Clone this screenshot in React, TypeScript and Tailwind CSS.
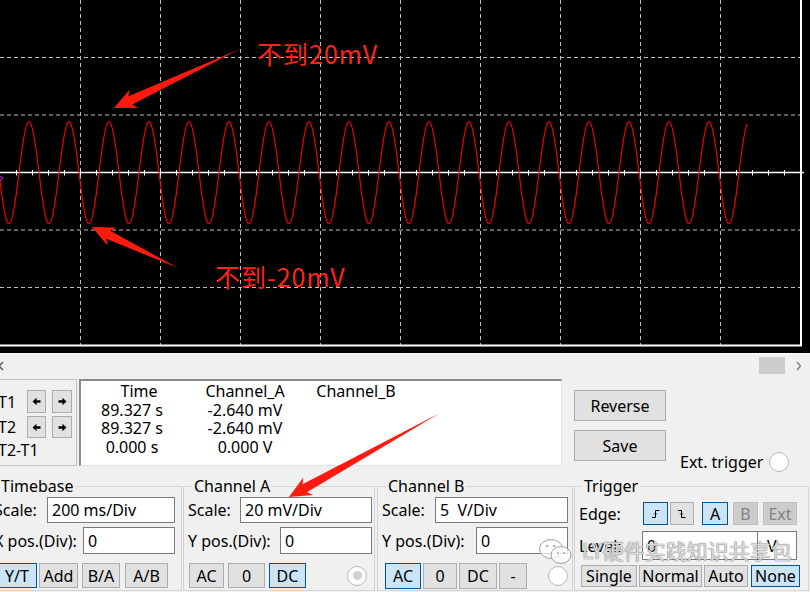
import React from 'react';

const btn = 'flex items-center justify-center border border-[#adadad] bg-[#e1e1e1] text-black leading-[18px]';
const btnOn = 'flex items-center justify-center border border-[#005499] bg-[#cce4f7] text-black leading-[18px]';
const btnOff = 'flex items-center justify-center border border-[#bfbfbf] bg-[#cccccc] text-[#838383] leading-[18px]';
const field = 'flex items-center border border-[#7a7a7a] bg-white leading-[18px] whitespace-pre';

// arrow polygon from tail to tip
function arrowPoints(tx: number, ty: number, px: number, py: number) {
  const h = 18, w = 10, s = 4.5, back = 4;
  const dx = px - tx, dy = py - ty;
  const L = Math.hypot(dx, dy);
  const ux = dx / L, uy = dy / L;
  const nx = -uy, ny = ux;
  const bx = px - ux * h, by = py - uy * h;
  const pts = [
    [tx, ty],
    [bx + nx * s, by + ny * s],
    [bx - ux * back + nx * w, by - uy * back + ny * w],
    [px, py],
    [bx - ux * back - nx * w, by - uy * back - ny * w],
    [bx - nx * s, by - ny * s],
  ];
  return pts.map((p) => p.map((v) => v.toFixed(1)).join(',')).join(' ');
}

const Scope = () => {
  const vx = [80, 160, 240, 320, 400, 480, 560, 640, 720];
  const hy = [57.5, 115, 230, 287.5];
  const ticks: number[] = [];
  for (let x = 16; x < 800; x += 16) ticks.push(x);
  let d = '';
  for (let x = 0; x <= 747; x++) {
    const y = 172.7 - 51 * Math.sin((2 * Math.PI * (x - 19)) / 40);
    d += (x === 0 ? 'M' : 'L') + x + ' ' + y.toFixed(1);
  }
  return (
    <svg width={810} height={353} className="block">
      {vx.map((x) => (
        <line key={x} x1={x + 0.5} y1={0} x2={x + 0.5} y2={345} stroke="#bdbdbd" strokeDasharray="4 3" />
      ))}
      {hy.map((y) => (
        <line key={y} x1={0} y1={y} x2={800} y2={y} stroke="#bdbdbd" strokeDasharray="4 3" />
      ))}
      <line x1={0} y1={172.5} x2={804} y2={172.5} stroke="#fff" strokeWidth={1.5} />
      {ticks.map((x) => (
        <line key={x} x1={x + 0.5} y1={170} x2={x + 0.5} y2={175.5} stroke="#fff" />
      ))}
      <line x1={801} y1={0} x2={801} y2={346} stroke="#fff" strokeWidth={2} />
      <line x1={0} y1={345.5} x2={802} y2={345.5} stroke="#fff" strokeWidth={2} />
      <path d={d} fill="none" stroke="#ff0000" strokeWidth={1.1} />
      <path d="M0 176 L3 178 L0 181" fill="none" stroke="#ff00ff" strokeWidth={1} />
    </svg>
  );
};

const ArrowIcon = ({ dir }: { dir: 'l' | 'r' }) => (
  <svg width={9} height={9} viewBox="0 0 9 9">
    <path
      d={dir === 'l' ? 'M0.5 4.5 L4.5 0.8 V3.3 H8.5 V5.7 H4.5 V8.2 Z' : 'M8.5 4.5 L4.5 0.8 V3.3 H0.5 V5.7 H4.5 V8.2 Z'}
      fill="#000"
    />
  </svg>
);

const Radio = ({ dot, className }: { dot?: boolean; className: string }) => (
  <div className={className}>
    <div className="w-full h-full rounded-full border border-[#b8b8b8] bg-white flex items-center justify-center">
      {dot && <div className="w-[9px] h-[9px] rounded-full bg-[#cfcfcf]" />}
    </div>
  </div>
);

const EdgeIcon = ({ rise }: { rise: boolean }) => (
  <svg width={10} height={10} viewBox="0 0 10 10">
    <path d={rise ? 'M1 8.5 H4.5 V1.5 H8.5' : 'M1 1.5 H4.5 V8.5 H8.5'} fill="none" stroke="#000" strokeWidth={1} />
    <path d={rise ? 'M3 5.5 L4.5 4 L6 5.5' : 'M3 4.5 L4.5 6 L6 4.5'} fill="none" stroke="#000" strokeWidth={0.9} />
  </svg>
);

const App: React.FC = () => {
  return (
    <div className="w-[810px] h-[592px] relative overflow-hidden bg-[#f0f0f0] text-[16px] text-black font-['Noto_Sans','Noto_Sans_CJK_SC',sans-serif]">
      {/* scope screen */}
      <div className="h-[353px] bg-black">
        <Scope />
      </div>
      <div className="h-px bg-white" />

      {/* scroll row */}
      <div className="h-[24px] flex items-start">
        <svg width={6} height={10} className="mt-[7px] -ml-[2px]" viewBox="0 0 6 10">
          <path d="M5 1 L1 5 L5 9" fill="none" stroke="#555" strokeWidth={1.5} />
        </svg>
        <div className="flex-1" />
        <div className="mt-[3px] w-[26px] h-[17px] bg-[#cdcdcd]" />
        <svg width={6} height={10} className="mt-[7px] ml-[11px] mr-[8px]" viewBox="0 0 6 10">
          <path d="M1 1 L4.5 5 L1 9" fill="none" stroke="#777" strokeWidth={1.2} />
        </svg>
      </div>

      {/* cursors + readout */}
      <div className="flex h-[93px] mt-px">
        <div className="-ml-[3px] w-[80px] h-[87px] border-t border-r border-b border-[#c4c4c4] pt-[10px] pl-px">
          <div className="flex items-center h-[23px]">
            <span className="w-[29px] leading-[18px]">T1</span>
            <div className={btn + ' w-[19px] h-[23px]'}><ArrowIcon dir="l" /></div>
            <div className={btn + ' ml-[6px] w-[20px] h-[23px]'}><ArrowIcon dir="r" /></div>
          </div>
          <div className="flex items-center h-[22px] mt-[3px]">
            <span className="w-[29px] leading-[18px]">T2</span>
            <div className={btn + ' w-[19px] h-[22px]'}><ArrowIcon dir="l" /></div>
            <div className={btn + ' ml-[6px] w-[20px] h-[22px]'}><ArrowIcon dir="r" /></div>
          </div>
          <div className="mt-[3px] leading-[18px]">T2-T1</div>
        </div>
        <div className="ml-[2px] w-[483px] h-[87px] bg-white border-l-2 border-t-2 border-r border-b border-l-[#8a8a8a] border-t-[#8a8a8a] border-r-[#e3e3e3] border-b-[#e3e3e3] pt-[1px]">
          <div className="grid grid-cols-[102px_124px_98px] leading-[18.5px] text-center">
            <div className="pl-[14px]">Time</div>
            <div>Channel_A</div>
            <div>Channel_B</div>
            <div>89.327 s</div>
            <div>-2.640 mV</div>
            <div />
            <div>89.327 s</div>
            <div>-2.640 mV</div>
            <div />
            <div>0.000 s</div>
            <div>0.000 V</div>
            <div />
          </div>
        </div>
        <div className="ml-[12px] w-[92px] pt-[11px] flex flex-col gap-[9px]">
          <div className={btn + ' h-[31px]'}>Reverse</div>
          <div className={btn + ' h-[31px]'}>Save</div>
        </div>
        <div className="ml-[14px] self-end flex items-center">
          <span className="leading-[18px]">Ext. trigger</span>
          <Radio className="ml-[6px] w-[20px] h-[20px]" />
        </div>
      </div>

      {/* control groups */}
      <div className="flex mt-[5px]">
        <fieldset className="-ml-[12px] w-[194px] h-[114px] border border-[#d5d5d5] pl-[5px]">
          <legend className="ml-[5px] px-[2px] leading-[18px]">Timebase</legend>
          <div className="flex items-center mt-[2px]">
            <span className="w-[53px] leading-[18px]">Scale:</span>
            <div className={field + ' w-[128px] h-[26px] pl-[4px]'}>200 ms/Div</div>
          </div>
          <div className="flex items-center mt-[4px]">
            <span className="w-[89px] leading-[18px]">X pos.(Div):</span>
            <div className={field + ' w-[92px] h-[27px] pl-[4px]'}>0</div>
          </div>
          <div className="flex items-center mt-[9px] h-[25px]">
            <div className={btnOn + ' ml-[3px] w-[40px] h-[25px]'}>Y/T</div>
            <div className={btn + ' ml-[2px] w-[39px] h-[25px]'}>Add</div>
            <div className={btn + ' ml-[4px] w-[38px] h-[25px]'}>B/A</div>
            <div className={btn + ' ml-[5px] w-[43px] h-[25px]'}>A/B</div>
          </div>
        </fieldset>

        <fieldset className="ml-px w-[192px] h-[114px] border border-[#d5d5d5] pl-[4px]">
          <legend className="ml-[4px] px-[2px] leading-[18px]">Channel A</legend>
          <div className="flex items-center mt-[2px]">
            <span className="w-[52px] leading-[18px]">Scale:</span>
            <div className={field + ' w-[132px] h-[26px] pl-[4px]'}>20 mV/Div</div>
          </div>
          <div className="flex items-center mt-[4px]">
            <span className="w-[92px] leading-[18px]">Y pos.(Div):</span>
            <div className={field + ' w-[92px] h-[27px] pl-[4px]'}>0</div>
          </div>
          <div className="flex items-center mt-[9px] h-[25px]">
            <div className={btn + ' ml-px w-[35px] h-[25px]'}>AC</div>
            <div className={btn + ' ml-[4px] w-[37px] h-[25px]'}>0</div>
            <div className={btnOn + ' ml-[4px] w-[37px] h-[25px]'}>DC</div>
            <Radio dot className="ml-[41px] w-[20px] h-[20px]" />
          </div>
        </fieldset>

        <fieldset className="ml-[2px] w-[196px] h-[114px] border border-[#d5d5d5] pl-[4px]">
          <legend className="ml-[4px] px-[2px] leading-[18px]">Channel B</legend>
          <div className="flex items-center mt-[2px]">
            <span className="w-[53px] leading-[18px]">Scale:</span>
            <div className={field + ' w-[133px] h-[26px] pl-[4px]'}>5  V/Div</div>
          </div>
          <div className="flex items-center mt-[4px]">
            <span className="w-[94px] leading-[18px]">Y pos.(Div):</span>
            <div className={field + ' w-[92px] h-[27px] pl-[4px]'}>0</div>
          </div>
          <div className="flex items-center mt-[9px] h-[26px]">
            <div className={btnOn + ' ml-[3px] w-[36px] h-[26px]'}>AC</div>
            <div className={btn + ' ml-[2px] w-[34px] h-[26px]'}>0</div>
            <div className={btn + ' ml-[2px] w-[38px] h-[26px]'}>DC</div>
            <div className={btn + ' ml-[2px] w-[28px] h-[26px]'}>-</div>
            <Radio className="ml-[21px] w-[20px] h-[20px]" />
          </div>
        </fieldset>

        <fieldset className="ml-px w-[235px] h-[114px] border border-[#d5d5d5] pl-[4px]">
          <legend className="ml-[3px] px-[2px] leading-[18px]">Trigger</legend>
          <div className="flex items-center mt-[7px] h-[23px]">
            <span className="w-[64px] leading-[18px]">Edge:</span>
            <div className={btnOn + ' w-[25px] h-[23px]'}><EdgeIcon rise /></div>
            <div className={btn + ' ml-[2px] w-[24px] h-[23px]'}><EdgeIcon rise={false} /></div>
            <div className={btnOn + ' ml-[8px] w-[26px] h-[23px]'}>A</div>
            <div className={btnOff + ' ml-[5px] w-[25px] h-[23px]'}>B</div>
            <div className={btnOff + ' ml-[5px] w-[34px] h-[23px]'}>Ext</div>
          </div>
          <div className="flex items-center mt-[6px]">
            <span className="w-[63px] leading-[18px]">Level:</span>
            <div className={field + ' w-[116px] h-[29px] pl-[4px]'}>0</div>
            <div className={field + ' w-[39px] h-[29px] pl-[9px] border-l-0'}>V</div>
          </div>
          <div className="flex items-center mt-[5px] h-[22px]">
            <div className={btn + ' ml-[2px] w-[56px] h-[22px]'}>Single</div>
            <div className={btn + ' ml-[2px] w-[63px] h-[22px]'}>Normal</div>
            <div className={btn + ' ml-[2px] w-[44px] h-[22px]'}>Auto</div>
            <div className={btnOn + ' ml-[3px] w-[49px] h-[22px]'}>None</div>
          </div>
        </fieldset>
      </div>

      {/* annotations drawn over the screenshot */}
      <svg width={810} height={592} className="absolute inset-0 pointer-events-none">
        <polygon points={arrowPoints(240, 49, 114, 108)} fill="#ff1a10" />
        <polygon points={arrowPoints(178, 268, 92, 227)} fill="#ff1a10" />
        <polygon points={arrowPoints(440, 413, 289, 497)} fill="#ff1a10" />
      </svg>
      <div className="absolute left-[257px] top-[41px] text-[25px] leading-none tracking-[1px] text-[#ff2418] font-['Noto_Sans_CJK_SC',sans-serif]">
        不到20mV
      </div>
      <div className="absolute left-[215px] top-[264px] text-[25px] leading-none tracking-[1px] text-[#ff2418] font-['Noto_Sans_CJK_SC',sans-serif]">
        不到-20mV
      </div>

      {/* watermark */}
      <div className="absolute left-[538px] top-[538px] flex items-start pointer-events-none">
        <svg width={36} height={28} viewBox="0 0 36 28">
          <ellipse cx={13} cy={11} rx={11.5} ry={9.5} fill="rgba(255,255,255,0.7)" stroke="#a0a0a0" strokeWidth={1} />
          <ellipse cx={23} cy={17} rx={10} ry={8.5} fill="rgba(255,255,255,0.75)" stroke="#a0a0a0" strokeWidth={1} />
          <circle cx={9} cy={8} r={1.3} fill="#b0b0b0" />
          <circle cx={16} cy={8} r={1.3} fill="#b0b0b0" />
          <circle cx={20} cy={15} r={1.1} fill="#b0b0b0" />
          <circle cx={26} cy={15} r={1.1} fill="#b0b0b0" />
        </svg>
        <span className="ml-[8px] mt-[2px] text-[21px] leading-none text-[rgba(255,255,255,0.75)] font-['Noto_Sans_CJK_SC',sans-serif] [text-shadow:0_0_1px_#666,0_0_1px_#888]">
          LY硬件实践知识共享包
        </span>
      </div>
    </div>
  );
};

export default App;
